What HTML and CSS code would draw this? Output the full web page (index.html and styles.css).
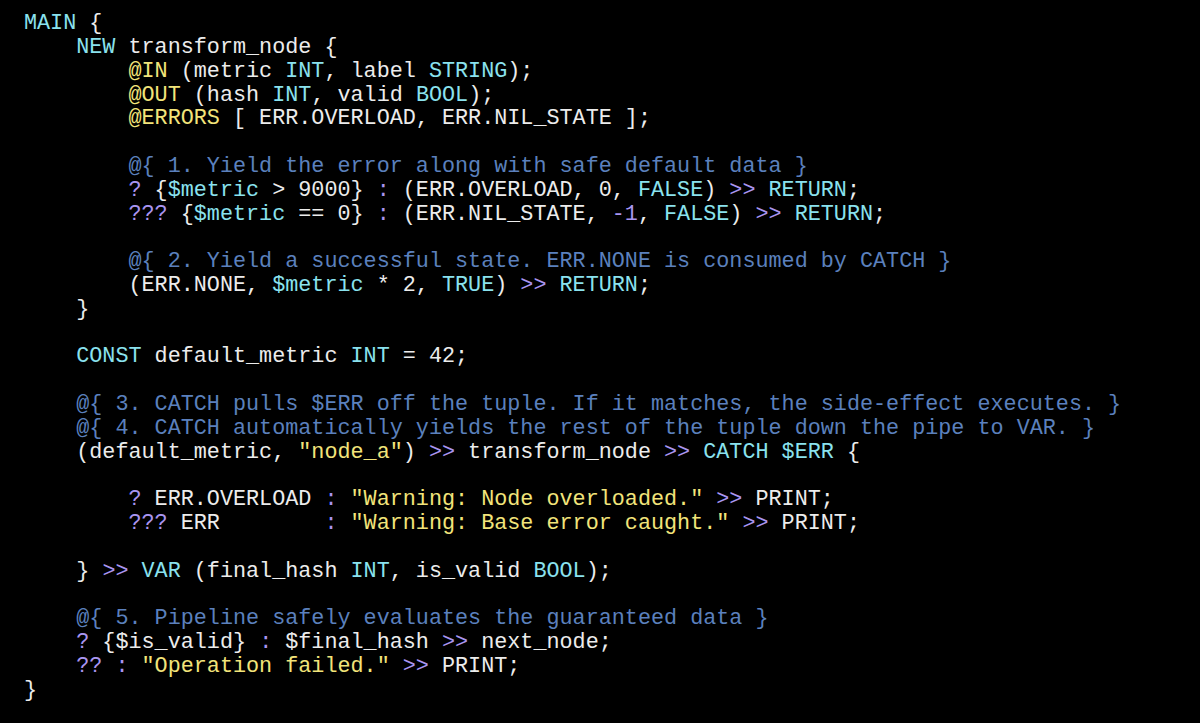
FILE: index.html
```html
<!DOCTYPE html>
<html>
<head>
<meta charset="utf-8">
<link rel="stylesheet" href="styles.css">
</head>
<body>
<pre class="code"><span class="k">MAIN</span> {
    <span class="k">NEW</span> transform_node {
        <span class="a">@IN</span> (metric <span class="k">INT</span>, label <span class="k">STRING</span>);
        <span class="a">@OUT</span> (hash <span class="k">INT</span>, valid <span class="k">BOOL</span>);
        <span class="a">@ERRORS</span> [ ERR.OVERLOAD, ERR.NIL_STATE ];

        <span class="c">@{ 1. Yield the error along with safe default data }</span>
        <span class="o">?</span> {<span class="k">$metric</span> &gt; 9000} <span class="o">:</span> (ERR.OVERLOAD, 0, <span class="k">FALSE</span>) <span class="o">&gt;&gt;</span> <span class="k">RETURN</span>;
        <span class="o">???</span> {<span class="k">$metric</span> == 0} <span class="o">:</span> (ERR.NIL_STATE, <span class="o">-1</span>, <span class="k">FALSE</span>) <span class="o">&gt;&gt;</span> <span class="k">RETURN</span>;

        <span class="c">@{ 2. Yield a successful state. ERR.NONE is consumed by CATCH }</span>
        (ERR.NONE, <span class="k">$metric</span> * 2, <span class="k">TRUE</span>) <span class="o">&gt;&gt;</span> <span class="k">RETURN</span>;
    }

    <span class="k">CONST</span> default_metric <span class="k">INT</span> = 42;

    <span class="c">@{ 3. CATCH pulls $ERR off the tuple. If it matches, the side-effect executes. }</span>
    <span class="c">@{ 4. CATCH automatically yields the rest of the tuple down the pipe to VAR. }</span>
    (default_metric, <span class="s">"node_a"</span>) <span class="o">&gt;&gt;</span> transform_node <span class="o">&gt;&gt;</span> <span class="k">CATCH</span> <span class="k">$ERR</span> {

        <span class="o">?</span> ERR.OVERLOAD <span class="o">:</span> <span class="s">"Warning: Node overloaded."</span> <span class="o">&gt;&gt;</span> PRINT;
        <span class="o">???</span> ERR        <span class="o">:</span> <span class="s">"Warning: Base error caught."</span> <span class="o">&gt;&gt;</span> PRINT;

    } <span class="o">&gt;&gt;</span> <span class="k">VAR</span> (final_hash <span class="k">INT</span>, is_valid <span class="k">BOOL</span>);

    <span class="c">@{ 5. Pipeline safely evaluates the guaranteed data }</span>
    <span class="o">?</span> {$is_valid} <span class="o">:</span> $final_hash <span class="o">&gt;&gt;</span> next_node;
    <span class="o">??</span> <span class="o">:</span> <span class="s">"Operation failed."</span> <span class="o">&gt;&gt;</span> PRINT;
}</pre>
</body>
</html>
```

FILE: styles.css
```css
html, body {
  margin: 0;
  padding: 0;
  background: #000;
  height: 100%;
}

.code {
  margin: 0;
  padding: 12.3px 0 0 24px;
  font-family: "Liberation Mono", "DejaVu Sans Mono", monospace;
  font-size: 21.78px;
  line-height: 23.8px;
  color: #ececec;
  white-space: pre;
}

.k { color: #8ae2ee; }
.a { color: #f2e47a; }
.s { color: #f2e47a; }
.c { color: #5b80bd; }
.o { color: #a995f0; }
```
